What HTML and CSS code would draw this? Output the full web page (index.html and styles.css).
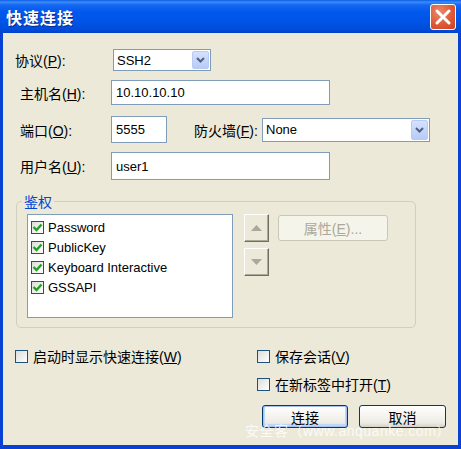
FILE: index.html
```html
<!DOCTYPE html>
<html lang="zh-CN">
<head>
    <meta charset="UTF-8">
    <title>快速连接</title>
    <link rel="stylesheet" href="styles.css">
</head>
<body>
    <div class="window">
        <div class="titlebar">
            <span class="title">快速连接</span>
            <span class="close">
                <svg width="24" height="24" viewBox="0 0 24 24">
                    <path d="M6 6 L18 18 M18 6 L6 18" stroke="#fff" stroke-width="3" stroke-linecap="round"/>
                </svg>
            </span>
        </div>
        <div class="content">
            <div class="row r1">
                <label class="lbl first">协议(<u>P</u>):</label>
                <div class="combo small">
                    <span class="value">SSH2</span>
                    <span class="drop"><svg width="9" height="6" viewBox="0 0 9 6"><path d="M1 1 L4.5 4.5 L8 1" fill="none" stroke="#4d6185" stroke-width="2"/></svg></span>
                </div>
            </div>
            <div class="row r2">
                <label class="lbl">主机名(<u>H</u>):</label>
                <div class="input wide">10.10.10.10</div>
            </div>
            <div class="row r3">
                <label class="lbl">端口(<u>O</u>):</label>
                <div class="input port">5555</div>
                <label class="lbl fw">防火墙(<u>F</u>):</label>
                <div class="combo big">
                    <span class="value">None</span>
                    <span class="drop"><svg width="9" height="6" viewBox="0 0 9 6"><path d="M1 1 L4.5 4.5 L8 1" fill="none" stroke="#4d6185" stroke-width="2"/></svg></span>
                </div>
            </div>
            <div class="row r4">
                <label class="lbl">用户名(<u>U</u>):</label>
                <div class="input wide">user1</div>
            </div>

            <div class="group">
                <span class="legend">鉴权</span>
                <div class="list">
                    <div class="item"><span class="check on"></span><span>Password</span></div>
                    <div class="item"><span class="check on"></span><span>PublicKey</span></div>
                    <div class="item"><span class="check on"></span><span>Keyboard Interactive</span></div>
                    <div class="item"><span class="check on"></span><span>GSSAPI</span></div>
                </div>
                <div class="arrows">
                    <span class="arrow"><svg width="11" height="6" viewBox="0 0 11 6"><path d="M0 6 L5.5 0 L11 6 Z" fill="#aca899"/></svg></span>
                    <span class="arrow"><svg width="11" height="6" viewBox="0 0 11 6"><path d="M0 0 L5.5 6 L11 0 Z" fill="#aca899"/></svg></span>
                </div>
                <button class="btn disabled">属性(<u>E</u>)...</button>
            </div>

            <div class="options">
                <div class="opt"><span class="check"></span><span>启动时显示快速连接(<u>W</u>)</span></div>
                <div class="opt"><span class="check"></span><span>保存会话(<u>V</u>)</span></div>
                <div></div>
                <div class="opt"><span class="check"></span><span>在新标签中打开(<u>T</u>)</span></div>
            </div>

            <div class="buttons">
                <button class="btn default">连接</button>
                <button class="btn">取消</button>
            </div>
        </div>
        <div class="watermark">安全客（www.anquanke.com）</div>
    </div>
</body>
</html>
```

FILE: styles.css
```css
body {
    margin: 0;
    font-family: "Liberation Sans", "Noto Sans CJK SC", sans-serif;
    font-size: 14px;
    color: #000;
}
.window {
    position: relative;
    width: 461px;
    height: 449px;
    box-sizing: border-box;
    background: #ece9d8;
    border-left: 3px solid #0842d4;
    border-right: 3px solid #0842d4;
    border-bottom: 4px solid #0842d4;
}
.titlebar {
    margin: 0 -3px;
    height: 33px;
    display: flex;
    align-items: center;
    justify-content: space-between;
    padding: 0 5px 0 6px;
    background: linear-gradient(#0a5de6 0, #3d8cf7 2px, #1467f0 5px, #0058ee 12px, #0054e6 22px, #004bd9 30px, #0042c8 33px);
}
.title {
    color: #fff;
    font-family: "Noto Sans CJK SC", sans-serif;
    font-weight: bold;
    font-size: 16px;
    letter-spacing: 1px;
    text-shadow: 1px 1px 0 #0a2a8c;
}
.close {
    width: 24px;
    height: 24px;
    border: 1px solid #fff;
    border-radius: 3px;
    background: radial-gradient(circle at 35% 30%, #ea8a6c 0, #de5a36 55%, #c9421c 100%);
    display: flex;
}
.content {
    padding: 16px 0 0 12px;
}
.row {
    display: flex;
    align-items: center;
}
.lbl {
    width: 91px;
    padding-left: 5px;
}
.lbl.first {
    width: 98px;
    padding-left: 0;
}
.r1 { height: 22px; }
.r2 { height: 25px; margin-top: 9px; }
.r3 { height: 27px; margin-top: 11px; }
.r4 { height: 28px; margin-top: 9px; }
.input {
    box-sizing: border-box;
    height: 100%;
    border: 1px solid #7f9db9;
    background: #fff;
    padding: 0 4px;
    font-size: 13px;
    display: flex;
    align-items: center;
}
.input.wide { width: 219px; }
.input.port { width: 56px; }
.lbl.fw {
    margin-left: 27px;
    width: 68px;
    padding-left: 0;
}
.combo {
    box-sizing: border-box;
    height: 22px;
    border: 1px solid #7f9db9;
    background: #fff;
    display: flex;
    align-items: center;
    justify-content: space-between;
    padding: 0 1px 0 3px;
    font-size: 13px;
}
.combo.small { width: 98px; }
.combo.big { width: 168px; height: 24px; }
.drop {
    width: 17px;
    height: calc(100% - 2px);
    box-sizing: border-box;
    border: 1px solid #b9cbf5;
    border-radius: 2px;
    background: linear-gradient(#d6e2fd, #b6cbf7);
    display: flex;
    align-items: center;
    justify-content: center;
}
.group {
    position: relative;
    margin: 21px 0 0 1px;
    width: 400px;
    height: 127px;
    box-sizing: border-box;
    border: 1px solid #d0d0bf;
    border-radius: 5px;
    padding: 12px 0 0 10px;
    display: flex;
    align-items: flex-start;
}
.legend {
    position: absolute;
    top: -11px;
    left: 5px;
    padding: 0 2px;
    background: #ece9d8;
    color: #0046d5;
    font-size: 14px;
}
.list {
    width: 206px;
    height: 104px;
    box-sizing: border-box;
    border: 1px solid #7f9db9;
    background: #fff;
    padding: 2px 0 0 3px;
    font-size: 13px;
}
.item {
    height: 20px;
    display: flex;
    align-items: center;
    gap: 4px;
}
.check {
    width: 13px;
    height: 13px;
    box-sizing: border-box;
    border: 1px solid #1c5180;
    background: linear-gradient(135deg, #dcdcd7, #fff);
    flex: none;
}
.check.on {
    background: no-repeat center / 11px 11px url("data:image/svg+xml,%3Csvg xmlns='http://www.w3.org/2000/svg' viewBox='0 0 11 11'%3E%3Cpath d='M1.5 5 L4.5 8 L9.5 2.5' fill='none' stroke='%2321a121' stroke-width='2.4'/%3E%3C/svg%3E"), linear-gradient(135deg, #dcdcd7, #fff);
}
.arrows {
    margin-left: 11px;
    display: flex;
    flex-direction: column;
    gap: 6px;
}
.arrow {
    width: 25px;
    height: 28px;
    box-sizing: border-box;
    border: 1px solid;
    border-color: #fff #716f64 #716f64 #fff;
    box-shadow: inset -1px -1px 0 #aca899;
    background: #ece9d8;
    display: flex;
    align-items: center;
    justify-content: center;
}
.btn {
    box-sizing: border-box;
    font-family: "Liberation Sans", "Noto Sans CJK SC", sans-serif;
    font-size: 14px;
    height: 23px;
    width: 86px;
    padding: 0;
    border: 1px solid #003c74;
    border-radius: 3px;
    background: linear-gradient(#fff 0, #f4f3ee 50%, #ecebe6 80%, #d6d0c5 100%);
    color: #000;
}
.btn.disabled {
    margin: 1px 0 0 9px;
    width: 110px;
    height: 26px;
    border-color: #c9c7ba;
    background: #f5f4ea;
    color: #aca899;
}
.btn.default {
    box-shadow: inset 0 0 0 1px #a6c1f0, inset 0 -1px 0 2px #c2d6f5;
}
.options {
    margin-top: 18px;
    display: grid;
    grid-template-columns: 242px auto;
    grid-auto-rows: 20px;
    row-gap: 8px;
}
.opt {
    display: flex;
    align-items: center;
    gap: 5px;
}
.buttons {
    margin-top: 11px;
    padding-right: 12px;
    display: flex;
    justify-content: flex-end;
    gap: 11px;
}
.buttons .btn:last-child { width: 87px; }
.watermark {
    position: absolute;
    left: 242px;
    top: 420px;
    color: rgba(255, 255, 255, 0.8);
    font-size: 14px;
    letter-spacing: 0.5px;
}
```
